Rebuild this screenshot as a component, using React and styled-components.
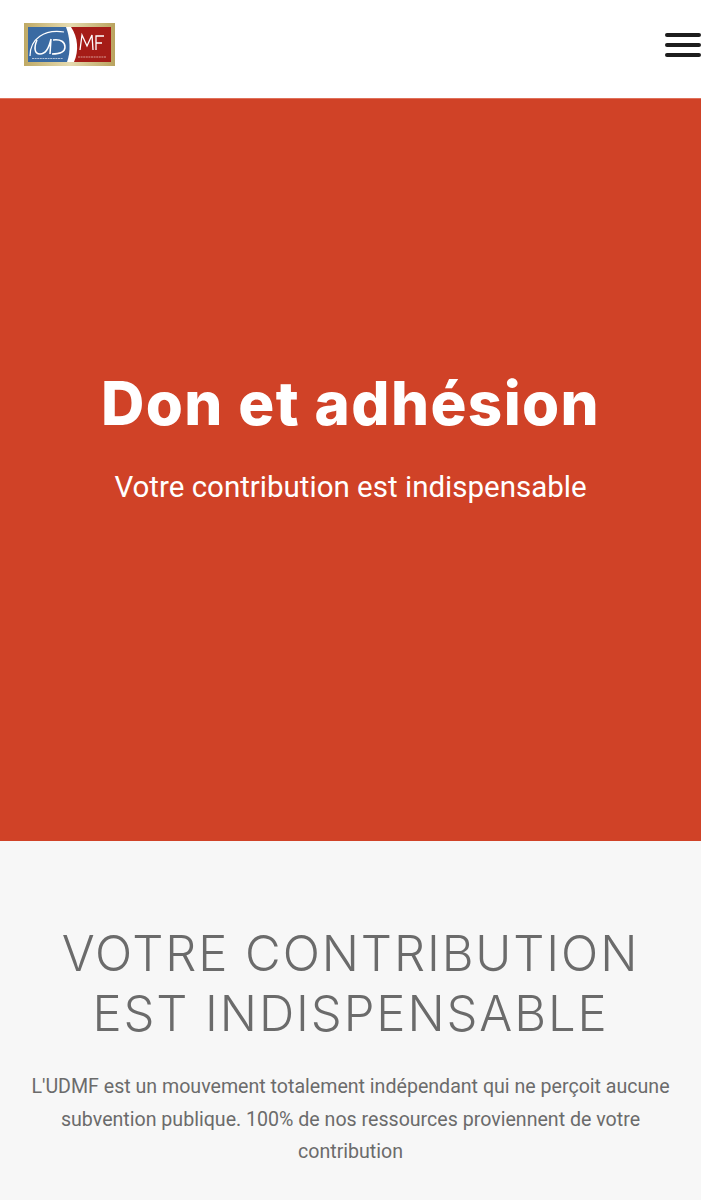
import React from 'react';
import styled, { createGlobalStyle } from 'styled-components';

const GlobalStyle = createGlobalStyle`
  html, body {
    margin: 0;
    padding: 0;
    background: #f7f7f7;
  }
  * {
    box-sizing: border-box;
  }
`;

const Page = styled.div`
  width: 701px;
  height: 1200px;
  overflow: hidden;
`;

const Header = styled.header`
  height: 98px;
  background: #fff;
  display: flex;
  align-items: flex-start;
  justify-content: space-between;
  padding: 23px 0 0 24px;
`;

const Logo = styled.svg`
  display: block;
  width: 91px;
  height: 44px;
`;

const Burger = styled.button`
  width: 36px;
  margin-top: 10px;
  padding: 0;
  border: 0;
  background: none;
  display: flex;
  flex-direction: column;
  gap: 6.5px;
`;

const BurgerLine = styled.span`
  display: block;
  height: 3.5px;
  border-radius: 2px;
  background: #1d1d1d;
`;

const Hero = styled.section`
  height: 743px;
  background: #d04227;
  border-top: 1px solid #e0705a;
  display: flex;
  flex-direction: column;
  align-items: center;
  padding-top: 268px;
  color: #fff;
`;

const HeroTitle = styled.h1`
  margin: 0;
  font-family: 'Inter', 'Liberation Sans', sans-serif;
  font-size: 60px;
  line-height: 72px;
  font-weight: 800;
  letter-spacing: 1.4px;
`;

const HeroText = styled.p`
  margin: 28px 0 0;
  font-family: 'Roboto', sans-serif;
  font-size: 29.5px;
  line-height: 40px;
  font-weight: 400;
`;

const Intro = styled.section`
  padding: 83px 24px 0;
  background: #f7f7f7;
  text-align: center;
  color: #6b6b6b;
`;

const IntroTitle = styled.h2`
  margin: 0;
  font-family: 'Inter', 'Liberation Sans', sans-serif;
  font-size: 49px;
  line-height: 60px;
  font-weight: 300;
  letter-spacing: 1.9px;
`;

const IntroText = styled.p`
  margin: 27px 0 0;
  font-family: 'Roboto', sans-serif;
  font-size: 19.6px;
  line-height: 32.5px;
  font-weight: 400;
`;

const UdmfLogo = () => (
  <Logo viewBox="0 0 91 44" aria-label="UDMF">
    <defs>
      <linearGradient id="gold" x1="0" y1="0" x2="1" y2="0">
        <stop offset="0" stopColor="#bfa964" />
        <stop offset="0.5" stopColor="#e6dbb0" />
        <stop offset="1" stopColor="#b9a35e" />
      </linearGradient>
    </defs>
    <rect width="91" height="43" fill="url(#gold)" />
    <rect x="4" y="4" width="83" height="35" fill="#fff" />
    <path d="M47 4h40v35H50c5-11 4-25-3-35z" fill="#a51c17" />
    <path d="M4 4h38c4 10 5 25 1 35H4z" fill="#3a6aa2" />
    <path d="M6 33C6 16 20 6 40 9" fill="none" stroke="#fff" strokeWidth="1.2" />
    <path d="M13 17c-3 7-3 14 3 14s9-6 11-15M27 16l-1 15M29 17c8-1 12 2 12 7s-6 7-13 7" fill="none" stroke="#fff" strokeWidth="1.5" />
    <path d="M56 27l2-15 5 11 5-11 1 15M72 27V13h8M72 20h6" fill="none" stroke="#fff" strokeWidth="1.3" />
    <path d="M8 35.5h31" stroke="#cfd9e6" strokeWidth="1.2" strokeDasharray="2 .6" opacity="0.8" />
    <path d="M54 34h28" stroke="#e6b9b4" strokeWidth="1.2" strokeDasharray="2 .6" opacity="0.8" />
  </Logo>
);

export default function App() {
  return (
    <Page>
      <GlobalStyle />
      <Header>
        <UdmfLogo />
        <Burger aria-label="Menu">
          <BurgerLine />
          <BurgerLine />
          <BurgerLine />
        </Burger>
      </Header>
      <Hero>
        <HeroTitle>Don et adhésion</HeroTitle>
        <HeroText>Votre contribution est indispensable</HeroText>
      </Hero>
      <Intro>
        <IntroTitle>
          VOTRE CONTRIBUTION
          <br />
          EST INDISPENSABLE
        </IntroTitle>
        <IntroText>
          L'UDMF est un mouvement totalement indépendant qui ne perçoit aucune subvention publique. 100% de nos
          ressources proviennent de votre contribution
        </IntroText>
      </Intro>
    </Page>
  );
}
